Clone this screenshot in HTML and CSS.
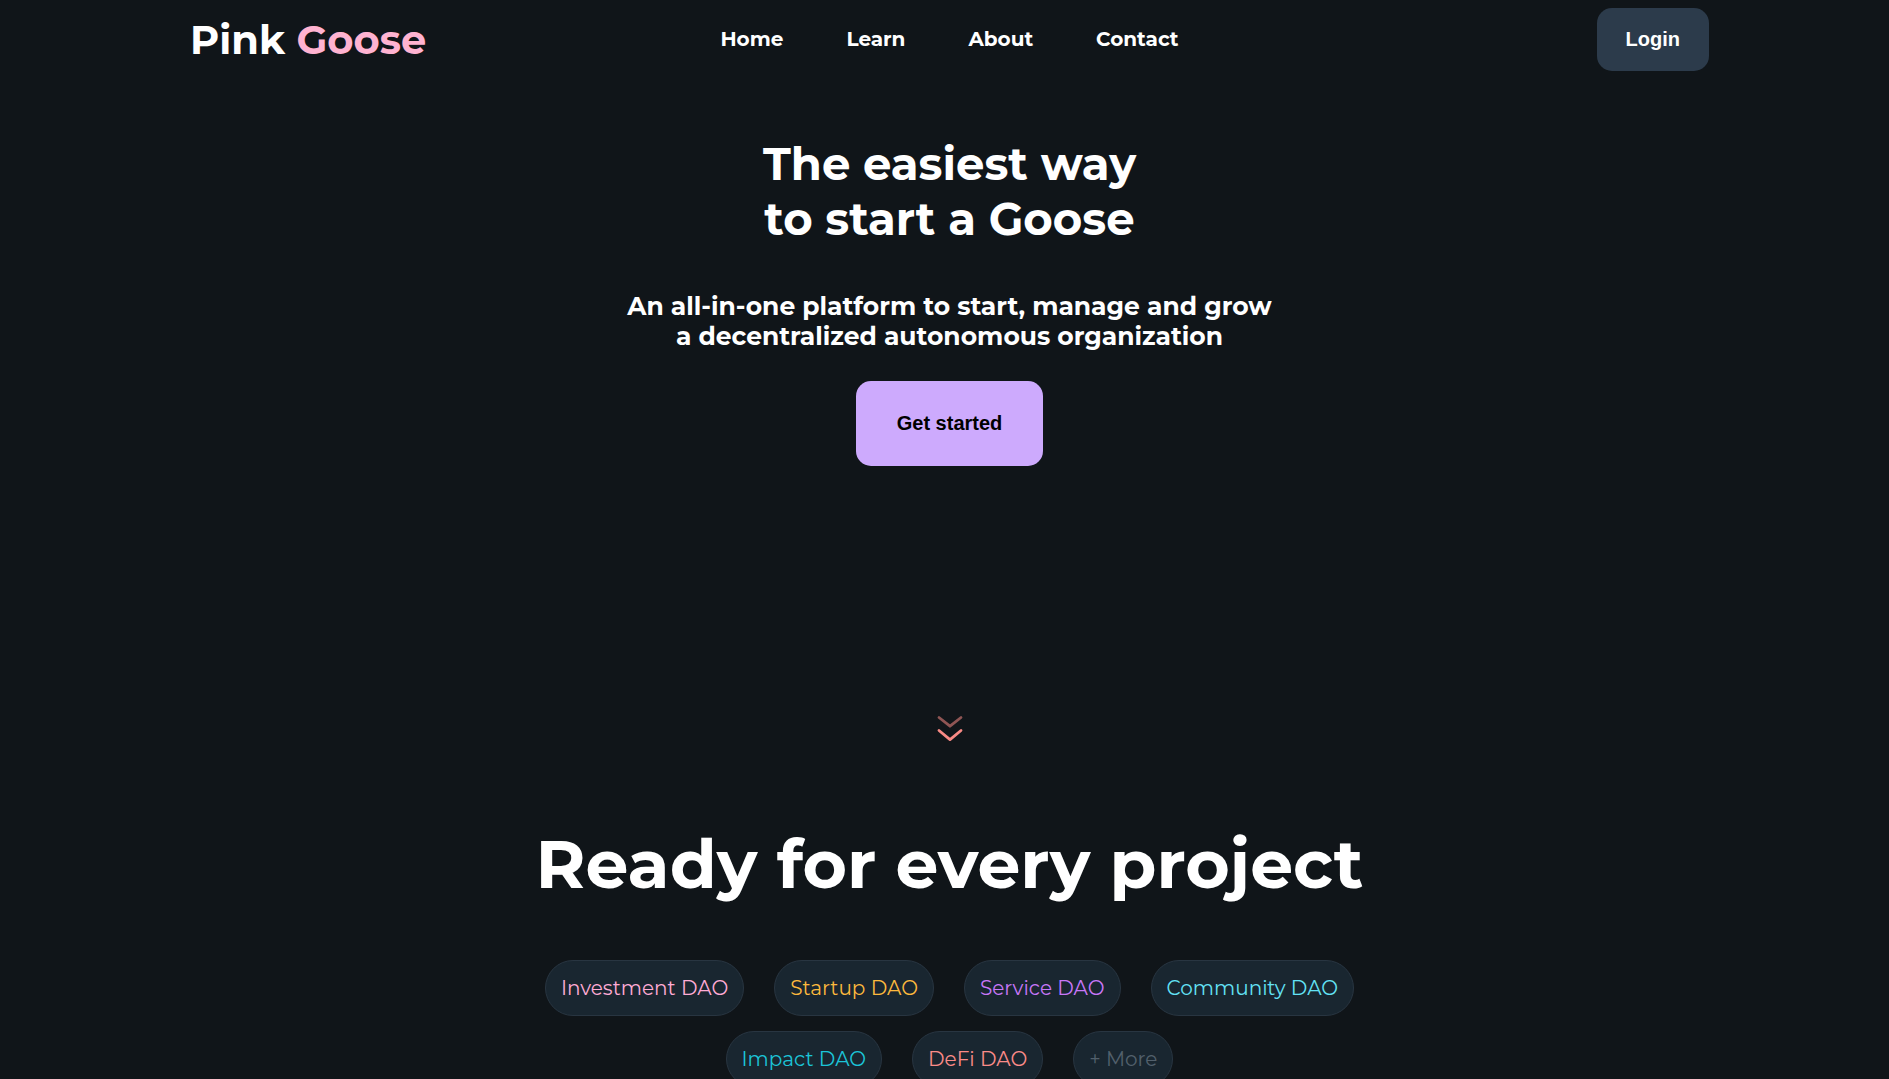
FILE: index.html
```html
<!DOCTYPE html>
<html lang="en">
<head>
<meta charset="utf-8">
<meta name="viewport" content="width=device-width, initial-scale=1">
<title>Pink Goose</title>
<link rel="stylesheet" href="styles.css">
</head>
<body>
<header class="header">
  <div class="header-side"><a class="logo" href="#">Pink <span class="logo-accent">Goose</span></a></div>
  <nav class="nav">
    <a href="#home">Home</a>
    <a href="#learn">Learn</a>
    <a href="#about">About</a>
    <a href="#contact">Contact</a>
  </nav>
  <div class="header-side header-end"><button class="login" type="button">Login</button></div>
</header>
<main>
  <section class="hero">
    <h1>The easiest way<br>to start a Goose</h1>
    <h2>An all-in-one platform to start, manage and grow<br>a decentralized autonomous organization</h2>
    <button class="cta" type="button">Get started</button>
  </section>
  <svg class="scroll-hint" width="26" height="28" viewBox="0 0 26 28" fill="none" stroke="#f88a85" stroke-width="2.8" stroke-linecap="round" stroke-linejoin="round" aria-hidden="true">
    <path d="M2 2.5 13 11.2 24 2.5" opacity=".55"/>
    <path d="M2 15.5 13 24.6 24 15.5"/>
  </svg>
  <section class="projects">
    <h2 class="projects-title">Ready for every project</h2>
    <ul class="pills">
      <li class="pill pink">Investment DAO</li>
      <li class="pill amber">Startup DAO</li>
      <li class="pill violet">Service DAO</li>
      <li class="pill sky">Community DAO</li>
      <li class="pill teal">Impact DAO</li>
      <li class="pill coral">DeFi DAO</li>
      <li class="pill muted">+ More</li>
    </ul>
  </section>
</main>
</body>
</html>
```

FILE: styles.css
```css
* {
  box-sizing: border-box;
}

body {
  margin: 0;
  padding-left: 10px;
  background: #101519;
  color: #fff;
  font-family: Montserrat, Inter, sans-serif;
  overflow-x: hidden;
}

.header {
  display: flex;
  align-items: center;
  padding: 8px 180px;
}

.header-side {
  flex: 1;
  display: flex;
}

.header-end {
  justify-content: flex-end;
}

.logo {
  color: #fff;
  font-size: 40px;
  font-weight: 700;
  line-height: 48px;
  text-decoration: none;
}

.logo-accent {
  color: #ffb3d1;
}

.nav {
  display: flex;
  gap: 63px;
}

.nav a {
  color: #fff;
  font-size: 20px;
  font-weight: 700;
  line-height: 23px;
  text-decoration: none;
}

button {
  border: 0;
  border-radius: 15px;
  font-family: "Liberation Sans", Arial, sans-serif;
  font-size: 20px;
  font-weight: 700;
  line-height: 23px;
}

.login {
  padding: 20px 29px;
  background: #2c3b4b;
  color: #fff;
}

.hero {
  display: flex;
  flex-direction: column;
  align-items: center;
  padding-top: 57px;
  text-align: center;
}

h1 {
  margin: 0;
  font-size: 45px;
  line-height: 55px;
}

h2 {
  margin: 45px 0 30px;
  font-size: 25px;
  line-height: 30px;
}

.cta {
  padding: 31px 41px;
  background: #cdaafd;
  color: #000;
}

.scroll-hint {
  display: block;
  margin: 249px auto 0;
}

.projects-title {
  margin: 78px 0 54px;
  font-size: 68px;
  line-height: 85px;
  text-align: center;
}

.pills {
  display: flex;
  flex-wrap: wrap;
  justify-content: center;
  gap: 15px 30px;
  max-width: 840px;
  margin: 0 auto;
  padding: 0;
  list-style: none;
}

.pill {
  padding: 15px;
  border: 1px solid #283541;
  border-radius: 28px;
  background: #192630;
  font-size: 20px;
  line-height: 24px;
}

.pink { color: #ffabd5; }
.amber { color: #fdb93d; }
.violet { color: #c877f8; }
.sky { color: #63e2f5; }
.teal { color: #1cc4d8; }
.coral { color: #fb8b88; }
.muted { color: #52606c; }
```
